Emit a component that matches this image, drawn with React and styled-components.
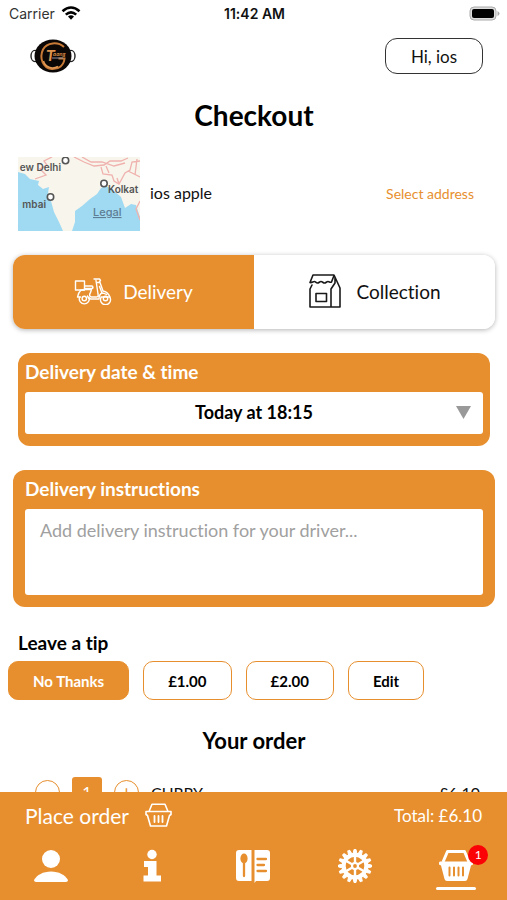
import { useState } from "react";
import styled, { createGlobalStyle } from "styled-components";

const orange = "#e78f2e";

const tips = ["No Thanks", "£1.00", "£2.00", "Edit"];

const GlobalStyle = createGlobalStyle`
  * {
    box-sizing: border-box;
  }

  body {
    margin: 0;
    background: #fff;
    color: #111;
    font-family: Lato, "Liberation Sans", sans-serif;
    font-variant-ligatures: none;
  }

  button, select, textarea {
    font: inherit;
    font-variant-ligatures: none;
    color: inherit;
  }

  button {
    cursor: pointer;
    padding: 0;
  }
`;

const Screen = styled.div`
  display: flex;
  flex-direction: column;
  height: 100vh;
`;

const StatusBar = styled.div`
  display: grid;
  grid-template-columns: 1fr auto 1fr;
  align-items: center;
  height: 28px;
  padding: 0 7px 2px 9px;
  font-family: Inter, "Liberation Sans", sans-serif;
  font-size: 14px;
`;

const Carrier = styled.span`
  display: flex;
  align-items: center;
  gap: 6px;
  color: #333;
`;

const Clock = styled.time`
  font-weight: 600;
`;

const Battery = styled.svg`
  justify-self: end;
`;

const Header = styled.header`
  display: flex;
  align-items: center;
  justify-content: space-between;
  height: 56px;
  padding: 0 24px 0 30px;
`;

const AccountButton = styled.button`
  width: 98px;
  height: 36px;
  border: 1px solid #333;
  border-radius: 12px;
  background: #fff;
  font-size: 17px;
`;

const Main = styled.main`
  flex: 1;
  min-height: 0;
  overflow-y: auto;
  scrollbar-width: none;
  padding: 12px 12px 24px 13px;
`;

const Title = styled.h1`
  margin: 0;
  color: #000;
  font-size: 28px;
  line-height: 38px;
  font-weight: 700;
  text-align: center;
`;

const AddressRow = styled.section`
  display: flex;
  align-items: center;
  gap: 10px;
  margin-top: 23px;
  padding: 0 21px 0 5px;
`;

const AddressName = styled.span`
  flex: 1;
  padding-bottom: 4px;
  font-size: 16px;
`;

const AddressLink = styled.a`
  padding-bottom: 2px;
  color: ${orange};
  font-size: 14px;
  text-decoration: none;
`;

const Methods = styled.div`
  display: grid;
  grid-template-columns: 1fr 1fr;
  height: 74px;
  margin-top: 24px;
  border-radius: 12px;
  overflow: hidden;
  box-shadow: 0 1px 5px rgba(0, 0, 0, 0.3);
`;

const Method = styled.button`
  display: flex;
  align-items: center;
  justify-content: center;
  gap: ${(p) => (p.$wide ? "14px" : "11px")};
  padding-bottom: 2px;
  border: none;
  background: ${(p) => (p.$active ? orange : "#fff")};
  color: ${(p) => (p.$active ? "#fff" : "#111")};
  font-size: 19px;
`;

const Card = styled.section`
  margin: 24px ${(p) => (p.$inset ? "5px" : "0")} 0;
  padding: 0 ${(p) => (p.$inset ? "7px" : "12px")} 12px;
  border-radius: 12px;
  background: ${orange};
`;

const CardLabel = styled.label`
  display: block;
  padding-bottom: 2px;
  color: #fff;
  font-size: 19px;
  line-height: 37px;
  font-weight: 700;
`;

const SelectWrap = styled.div`
  position: relative;

  svg {
    position: absolute;
    right: 12px;
    top: 14px;
    pointer-events: none;
  }
`;

const TimeSelect = styled.select`
  display: block;
  width: 100%;
  height: 42px;
  padding-bottom: 2px;
  border: none;
  border-radius: 3px;
  background: #fff;
  appearance: none;
  color: #000;
  font-size: 18px;
  font-weight: 700;
  text-align: center;
  text-align-last: center;
`;

const Instructions = styled.textarea`
  display: block;
  width: 100%;
  height: 86px;
  padding: 9px 15px;
  border: none;
  border-radius: 3px;
  background: #fff;
  resize: none;
  font-size: 18px;
  line-height: 24px;

  &::placeholder {
    color: #a0a0a0;
    opacity: 1;
  }
`;

const TipTitle = styled.h2`
  margin: 24px 5px 0;
  color: #000;
  font-size: 19px;
  line-height: 24px;
  font-weight: 700;
`;

const Tips = styled.div`
  display: flex;
  gap: 14px;
  margin: 6px -5px 0;
`;

const Tip = styled.button`
  height: 39px;
  padding: 0 24px;
  border: 1px solid ${orange};
  border-radius: 10px;
  background: ${(p) => (p.$active ? orange : "#fff")};
  color: ${(p) => (p.$active ? "#fff" : "#000")};
  font-size: 15px;
  font-weight: 700;
`;

const OrderTitle = styled.h2`
  margin: 27px 0 0;
  color: #000;
  font-size: 22px;
  line-height: 28px;
  font-weight: 700;
  text-align: center;
`;

const OrderItem = styled.div`
  display: flex;
  align-items: center;
  gap: 12px;
  margin-top: 22px;
  padding: 0 15px 0 22px;
  font-size: 16px;
`;

const Step = styled.button`
  width: 25px;
  height: 25px;
  border: 1px solid ${orange};
  border-radius: 50%;
  background: #fff;
  color: ${orange};
  font-size: 18px;
  line-height: 20px;
`;

const Quantity = styled.span`
  width: 30px;
  border-radius: 3px;
  background: ${orange};
  color: #fff;
  line-height: 30px;
  text-align: center;
`;

const ItemName = styled.span`
  flex: 1;
`;

const Footer = styled.footer`
  flex-shrink: 0;
  background: ${orange};
  color: #fff;
`;

const OrderBar = styled.div`
  display: flex;
  align-items: center;
  justify-content: space-between;
  height: 48px;
  padding: 0 25px 2px;
  font-size: 17px;
`;

const PlaceOrder = styled.button`
  display: flex;
  align-items: center;
  gap: 16px;
  border: none;
  background: none;
  font-size: 21px;
`;

const Nav = styled.nav`
  display: grid;
  grid-template-columns: repeat(5, 1fr);
  height: 60px;
`;

const NavLink = styled.a`
  display: flex;
  flex-direction: column;
  align-items: center;
  padding-top: 9px;
  color: #fff;

  &::after {
    content: "";
    width: 40px;
    height: 3px;
    margin-top: 4px;
    border-radius: 2px;
    background: ${(p) => (p.$active ? "#fff" : "transparent")};
  }
`;

const BasketWrap = styled.span`
  position: relative;
  height: 34px;
`;

const Badge = styled.span`
  position: absolute;
  top: -4px;
  right: -15px;
  width: 20px;
  border-radius: 50%;
  background: #fb0207;
  font-size: 12px;
  line-height: 20px;
  text-align: center;
`;

const Wifi = () => (
  <svg width="20" height="14" viewBox="0 0 20 14" fill="none" stroke="#000" strokeWidth="2.6">
    <path d="M1.5 5.2Q10 -2.2 18.5 5.2" />
    <path d="M4.8 8.6Q10 4 15.2 8.6" />
    <path d="M7 10.6Q10 8 13 10.6L10 13.8Z" fill="#000" stroke="none" />
  </svg>
);

const Logo = () => (
  <svg width="46" height="34" viewBox="0 0 46 34" role="img" aria-label="Restaurant logo">
    <g fill="#fff" stroke="#222" strokeWidth="1.4">
      <ellipse cx="5" cy="17" rx="4" ry="5.6" />
      <ellipse cx="41" cy="17" rx="4" ry="5.6" />
    </g>
    <ellipse cx="23" cy="17" rx="18.5" ry="16.5" fill="#0b0706" />
    <path
      d="M34 8C28 2.500 17 3.200 13 10.500C9 19 13 29 21.500 30C29 30.600 34 26 34.500 19.500H28.500"
      fill="none"
      stroke="#c87a37"
      strokeWidth="2"
    />
    <path d="M13.500 22C15 28 22 31 28 27.500" fill="none" stroke="#e39a55" strokeWidth="1.500" />
    <text x="16" y="22" fill="#df944e" fontSize="16" fontWeight="700" fontStyle="italic">T</text>
    <text x="23" y="17" fill="#d98a44" fontSize="6" fontWeight="700" fontStyle="italic">aang</text>
    <path d="M22 19h11" stroke="#8d8fa0" strokeWidth="1" />
  </svg>
);

const MapPreview = () => (
  <svg width="122" height="74" viewBox="0 0 122 74" role="img" aria-label="Map" fontFamily="Inter, sans-serif">
    <rect width="122" height="74" fill="#f8f5ec" />
    <path
      d="M0 15L7 17L12 22L21 24L20 28L25 32L31 30L30 36L33 44L36 55L41 65L45 74H0Z"
      fill="#a0daf2"
    />
    <path
      d="M54 74L57 65L57 54L64 49L72 42L79 37L83 31L88 29L94 32L103 40L107 51L113 47L118 48L122 60V74Z"
      fill="#a0daf2"
    />
    <path
      d="M34 0L26 4L29 8L22 12L28 18L17 22M56 0L66 5L76 9L86 8L92 4L103 4L110 1M64 0L73 5L84 5L96 9L107 6M83 10L85 17L94 18L96 24L101 27L107 16L112 13L114 5L122 4M88 9L91 16M119 2L117 18M122 44L118 52L122 63M110 14L122 20M101 27L99 21"
      fill="none"
      stroke="#efb2ae"
      strokeWidth="1.300"
    />
    <g fill="#fff" stroke="#555" strokeWidth="1.600">
      <circle cx="47.500" cy="3.500" r="3.200" />
      <circle cx="86" cy="26.500" r="3.200" />
      <circle cx="32.500" cy="40" r="3.200" />
    </g>
    <g fill="#555" fontSize="10" fontWeight="600">
      <text x="43" y="14" textAnchor="end">ew Delhi</text>
      <text x="90" y="36">Kolkat</text>
      <text x="28" y="51" textAnchor="end">mbai</text>
    </g>
    <text x="75" y="59" fill="#5d7d94" fontSize="11" fontWeight="500" textDecoration="underline">Legal</text>
  </svg>
);

const Scooter = () => (
  <svg width="38" height="28" viewBox="0 0 38 28" fill="none" stroke="#fff" strokeWidth="1.400" strokeLinejoin="round" strokeLinecap="round">
    <rect x="1.500" y="4" width="9" height="9" />
    <path d="M11 9h7c1 0 1.500 2.500 0 2.500h-7.500M10 13h-3c-2 2-3 4-3.500 7h3M10 12.500h7.500l-1 3c-1.500 2-1 4.500 1 4.500h5c1.500 0 2-1 1.500-3L22 3.500M20 2h5.500l1 1.500-1.500 2h-2.500M26 5.500l3 8.500c3 .5 5.500 2.500 7 6h-9M25.500 9.500L28 16c-2 1-3 3-3 6h-8c-2 0-3-1-3.500-3M27.500 16c2 0 3.500 .5 5 1.500" />
    <path d="M5.500 20.500a5 5 0 1 0 9.600 0M27 20.500a5 5 0 1 0 9 0" />
    <circle cx="10.300" cy="21.500" r="2.200" />
    <circle cx="31.500" cy="21.500" r="2.200" />
  </svg>
);

const Bag = () => (
  <svg width="34" height="34" viewBox="0 0 34 34" fill="none" stroke="#1a1a1a" strokeWidth="1.600" strokeLinejoin="round" strokeLinecap="round">
    <path d="M7 1H26l6 13v19H2V15l2-4M7 1H5L2 8.500c2 .5 3-1 4.500-1 1 0 1.500 1.500 3 1.500s2-1.500 3.500-1.500S15 9 16.500 9 18.500 7.500 20 7.500 22 9 23.500 8L26 1.500M27 3v6l-4 6v17.500" />
    <rect x="8" y="19.500" width="10.500" height="8" />
  </svg>
);

const BasketOutline = () => (
  <svg width="27" height="24" viewBox="0 0 27 24" fill="none" stroke="#fff" strokeWidth="1.600" strokeLinejoin="round" strokeLinecap="round">
    <path d="M4 8.500L7 1.200h13l3 7.300M1 8.500h25v3l-1.500 1L21.500 23h-16L2.500 12.500 1 11.500Z" />
    <path d="M9.500 13v6M13.500 13v6M17.500 13v6" strokeWidth="1.800" />
  </svg>
);

const Person = () => (
  <svg width="34" height="34" viewBox="0 0 34 34" fill="#fff">
    <circle cx="17" cy="10" r="9" />
    <path d="M0 31C3 26 9 22.500 17 22.500S31 26 34 31c0 1-1 2-2 2H2C1 33 0 32 0 31Z" />
  </svg>
);

const Info = () => (
  <svg width="34" height="34" viewBox="0 0 34 34" fill="#fff">
    <circle cx="17" cy="5.500" r="4.700" />
    <path d="M9 12h12.500v14.500H26V32.500H8.500v-6H13V18H9Z" />
  </svg>
);

const Menu = () => (
  <svg width="34" height="34" viewBox="0 0 34 34">
    <path d="M3 1H15.500V32H3q-3 0-3-3V4q0-3 3-3ZM18.500 1H31q3 0 3 3v25q0 3-3 3H20l-1.500 2Z" fill="#fff" />
    <ellipse cx="8" cy="9.500" rx="3.600" ry="5" fill={orange} />
    <path d="M8 13v14M21.500 10H30M21.500 16H28M21.500 22H30" stroke={orange} strokeWidth="2.300" strokeLinecap="round" />
  </svg>
);

const Gear = () => (
  <svg width="34" height="34" viewBox="0 0 34 34" fill="none" stroke="#fff">
    {Array.from({ length: 16 }, (_, i) => (
      <path key={i} d="M15.200 4.500L16 .5h2l.8 4Z" fill="#fff" strokeWidth="1" transform={`rotate(${i * 22.5} 17 17)`} />
    ))}
    <circle cx="17" cy="17" r="11.300" strokeWidth="4" />
    {[0, 60, 120, 180, 240, 300].map((angle) => (
      <path key={angle} d="M17 14V6" strokeWidth="2.400" transform={`rotate(${angle} 17 17)`} />
    ))}
    <circle cx="17" cy="17" r="3" strokeWidth="2.200" />
  </svg>
);

const Basket = () => (
  <svg width="34" height="34" viewBox="0 0 34 34">
    <path d="M4 13L8.500 2.500H25.500L30 13" fill="none" stroke="#fff" strokeWidth="3" strokeLinejoin="round" />
    <path d="M1 12.500H33q1 0 1 1.500v1.500l-2 1L28.500 30q-.5 2-2.500 2H8q-2 0-2.500-2L2 16.500l-2-1V14q0-1.500 1-1.500Z" fill="#fff" />
    <path d="M10.500 18.500v8M15 18.500v8M19.500 18.500v8M24 18.500v8" stroke={orange} strokeWidth="2" strokeLinecap="round" />
  </svg>
);

export default function Checkout() {
  const [method, setMethod] = useState("delivery");
  const [tip, setTip] = useState("No Thanks");
  const [quantity, setQuantity] = useState(1);

  return (
    <Screen>
      <GlobalStyle />
      <StatusBar>
        <Carrier>Carrier <Wifi /></Carrier>
        <Clock>11:42 AM</Clock>
        <Battery width="31" height="15" viewBox="0 0 31 15">
          <rect x="1" y="1" width="26" height="13" rx="4" fill="#ddd" stroke="#aaa" />
          <rect x="3" y="3" width="22" height="9" rx="2" fill="#000" />
          <path d="M28.500 5v5q2-1 2-2.500t-2-2.500Z" fill="#aaa" />
        </Battery>
      </StatusBar>

      <Header>
        <Logo />
        <AccountButton>Hi, ios</AccountButton>
      </Header>

      <Main>
        <Title>Checkout</Title>

        <AddressRow>
          <MapPreview />
          <AddressName>ios apple</AddressName>
          <AddressLink href="#address">Select address</AddressLink>
        </AddressRow>

        <Methods>
          <Method $active={method === "delivery"} onClick={() => setMethod("delivery")}>
            <Scooter /> Delivery
          </Method>
          <Method $wide $active={method === "collection"} onClick={() => setMethod("collection")}>
            <Bag /> Collection
          </Method>
        </Methods>

        <Card $inset>
          <CardLabel htmlFor="time">Delivery date &amp; time</CardLabel>
          <SelectWrap>
            <TimeSelect id="time">
              <option>Today at 18:15</option>
            </TimeSelect>
            <svg width="15" height="13" viewBox="0 0 15 13">
              <path d="M0 0H15L7.500 13Z" fill="#999" />
            </svg>
          </SelectWrap>
        </Card>

        <Card>
          <CardLabel htmlFor="instructions">Delivery instructions</CardLabel>
          <Instructions id="instructions" placeholder="Add delivery instruction for your driver..." />
        </Card>

        <TipTitle>Leave a tip</TipTitle>
        <Tips>
          {tips.map((item) => (
            <Tip key={item} $active={tip === item} onClick={() => setTip(item)}>{item}</Tip>
          ))}
        </Tips>

        <OrderTitle>Your order</OrderTitle>
        <OrderItem>
          <Step aria-label="Remove one" onClick={() => setQuantity(Math.max(0, quantity - 1))}>−</Step>
          <Quantity>{quantity}</Quantity>
          <Step aria-label="Add one" onClick={() => setQuantity(quantity + 1)}>+</Step>
          <ItemName>CURRY</ItemName>
          <span>£6.10</span>
        </OrderItem>
      </Main>

      <Footer>
        <OrderBar>
          <PlaceOrder>Place order <BasketOutline /></PlaceOrder>
          <span>Total: £6.10</span>
        </OrderBar>
        <Nav>
          <NavLink href="#account" aria-label="Account"><Person /></NavLink>
          <NavLink href="#info" aria-label="Information"><Info /></NavLink>
          <NavLink href="#menu" aria-label="Menu"><Menu /></NavLink>
          <NavLink href="#settings" aria-label="Settings"><Gear /></NavLink>
          <NavLink href="#basket" aria-label="Basket" $active>
            <BasketWrap>
              <Basket />
              <Badge>1</Badge>
            </BasketWrap>
          </NavLink>
        </Nav>
      </Footer>
    </Screen>
  );
}
